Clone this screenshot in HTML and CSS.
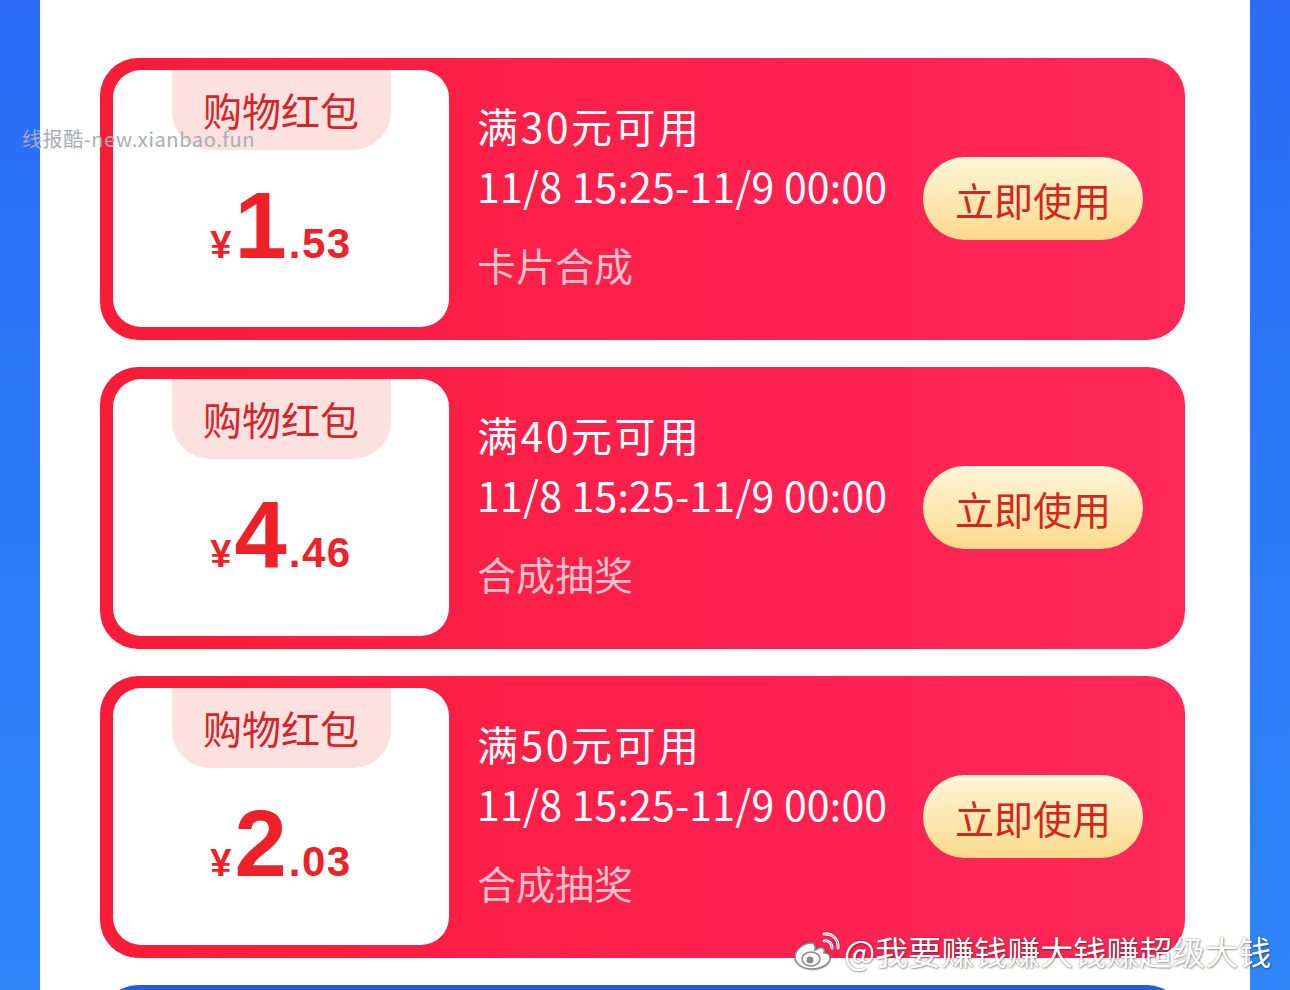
FILE: index.html
```html
<!DOCTYPE html>
<html lang="zh-CN">
<head>
    <meta charset="UTF-8">
    <title>购物红包</title>
    <link rel="stylesheet" href="styles.css">
</head>
<body>
    <div class="page">
        <div class="coupon">
            <div class="coupon-left">
                <div class="coupon-tag">购物红包</div>
                <div class="price"><span class="yen">¥</span><span class="int">1</span><span class="dec">.53</span></div>
            </div>
            <div class="coupon-info">
                <div class="cond">满30元可用</div>
                <div class="date">11/8 15:25-11/9 00:00</div>
                <div class="source">卡片合成</div>
            </div>
            <button class="use-btn">立即使用</button>
        </div>

        <div class="coupon">
            <div class="coupon-left">
                <div class="coupon-tag">购物红包</div>
                <div class="price"><span class="yen">¥</span><span class="int">4</span><span class="dec">.46</span></div>
            </div>
            <div class="coupon-info">
                <div class="cond">满40元可用</div>
                <div class="date">11/8 15:25-11/9 00:00</div>
                <div class="source">合成抽奖</div>
            </div>
            <button class="use-btn">立即使用</button>
        </div>

        <div class="coupon">
            <div class="coupon-left">
                <div class="coupon-tag">购物红包</div>
                <div class="price"><span class="yen">¥</span><span class="int">2</span><span class="dec">.03</span></div>
            </div>
            <div class="coupon-info">
                <div class="cond">满50元可用</div>
                <div class="date">11/8 15:25-11/9 00:00</div>
                <div class="source">合成抽奖</div>
            </div>
            <button class="use-btn">立即使用</button>
        </div>

        <div class="next-block"></div>
    </div>

    <!-- watermarks over the screenshot -->
    <div class="site-mark">线报酷-new.xianbao.fun</div>

    <div class="weibo-mark">
        <svg class="weibo-logo" width="46" height="40" viewBox="0 0 46 40">
            <path d="M18 12c-9 0-17 7-17 14 0 7 8 12 17 12 10 0 18-5 18-11 0-4-4-5-6-5 1-3 0-6-4-5-3 1-5 2-5 2 1-4-1-7-3-7z" fill="#fff" stroke="#8a8a8a" stroke-width="1.6"/>
            <ellipse cx="17" cy="28" rx="9" ry="7" fill="#fff" stroke="#8a8a8a" stroke-width="1.6"/>
            <circle cx="16" cy="29" r="3.5" fill="#8a8a8a"/>
            <path d="M30 10c4-1 8 2 8 7" fill="none" stroke="#fff" stroke-width="3" stroke-linecap="round"/>
            <path d="M30 3c8-1 15 5 14 14" fill="none" stroke="#fff" stroke-width="3" stroke-linecap="round"/>
            <path d="M30 10c4-1 8 2 8 7M30 3c8-1 15 5 14 14" fill="none" stroke="#8a8a8a" stroke-width="0.8" stroke-linecap="round"/>
        </svg>
        <span>@我要赚钱赚大钱赚超级大钱</span>
    </div>
</body>
</html>
```

FILE: styles.css
```css
body {
    position: relative;
    margin: 0;
    height: 990px;
    overflow: hidden;
    background: linear-gradient(180deg, #2a6cf6 0%, #2e86f9 100%);
    font-family: "Noto Sans CJK SC", "Noto Sans", sans-serif;
}
.page {
    width: 1210px;
    height: 990px;
    margin-left: 40px;
    padding-top: 58px;
    box-sizing: border-box;
    background-color: #fff;
    overflow: hidden;
}
.site-mark {
    position: absolute;
    left: 22px;
    top: 124px;
    font-size: 20px;
    color: #a7adb6;
    letter-spacing: 0.6px;
    white-space: nowrap;
}
.coupon {
    display: flex;
    align-items: stretch;
    width: 1085px;
    height: 282px;
    margin: 0 0 27px 60px;
    padding: 12px 42px 13px 13px;
    box-sizing: border-box;
    border-radius: 38px;
    background: linear-gradient(90deg, #f91c38 0%, #fe2150 60%, #ff2857 100%);
}
.coupon-left {
    width: 336px;
    flex-shrink: 0;
    display: flex;
    flex-direction: column;
    align-items: center;
    background-color: #fff;
    border-radius: 28px;
}
.coupon-tag {
    width: 219px;
    height: 80px;
    line-height: 78px;
    text-align: center;
    font-size: 39px;
    color: #d4252b;
    background-color: #fde1df;
    border-radius: 0 0 38px 38px;
}
.price {
    margin-top: 31px;
    color: #ee2129;
    font-family: "Liberation Sans", Arial, sans-serif;
    font-weight: bold;
    line-height: 90px;
    white-space: nowrap;
}
.price .yen {
    font-size: 38px;
    margin-right: 3px;
}
.price .int {
    font-size: 94px;
    letter-spacing: 2px;
}
.price .dec {
    font-size: 42px;
    letter-spacing: 1.5px;
}
.coupon-info {
    flex: 1;
    padding: 25px 0 0 28px;
    color: #fff;
}
.cond, .date {
    font-size: 41px;
    line-height: 60px;
    white-space: nowrap;
}
.cond {
    letter-spacing: 2.5px;
}
.date {
    letter-spacing: 0.2px;
}
.source {
    margin-top: 19px;
    font-size: 39px;
    line-height: 60px;
    color: rgba(255, 255, 255, 0.72);
}
.use-btn {
    align-self: center;
    width: 220px;
    height: 83px;
    padding: 0;
    border: none;
    border-radius: 42px;
    background: linear-gradient(180deg, #fff5d8 0%, #fde7b0 55%, #fbd98b 100%);
    color: #d3261f;
    font-family: "Noto Sans CJK SC", sans-serif;
    font-size: 39px;
    cursor: pointer;
}
.next-block {
    height: 60px;
    margin: 0 0 0 60px;
    width: 1085px;
    border-radius: 38px 38px 0 0;
    background-color: #1c5fe6;
}
.weibo-mark {
    position: absolute;
    left: 794px;
    top: 927px;
    display: flex;
    align-items: center;
    gap: 4px;
    color: #fff;
    font-size: 33px;
    text-shadow: 0 0 2px rgba(0, 0, 0, 0.45), 1px 1px 2px rgba(0, 0, 0, 0.3);
    white-space: nowrap;
}
.weibo-logo {
    filter: drop-shadow(0 0 1px rgba(0, 0, 0, 0.3));
}
```
